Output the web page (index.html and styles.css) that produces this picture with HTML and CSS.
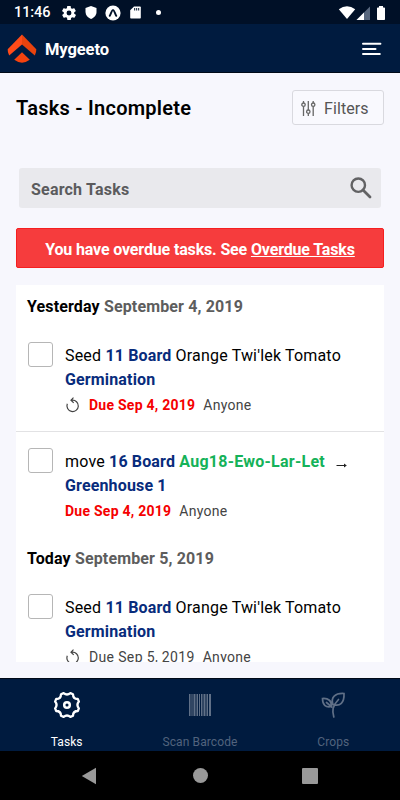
FILE: index.html
```html
<!DOCTYPE html>
<html lang="en">
<head>
<meta charset="utf-8">
<title>Mygeeto</title>
<link rel="stylesheet" href="styles.css">
</head>
<body>
<div class="statusbar">
  <span class="clock">11:46</span>
  <svg class="gear" width="14" height="14" viewBox="2 2 20 20" fill="#fff"><path d="M19.4 13c0-.3.1-.6.1-1s0-.7-.1-1l2.1-1.600c.2-.2.200-.4.100-.6l-2-3.500c-.1-.2-.4-.3-.6-.2l-2.500 1c-.5-.4-1.100-.7-1.700-1l-.4-2.600c0-.3-.2-.5-.5-.5h-4c-.2 0-.5.200-.5.400l-.4 2.700c-.6.200-1.200.6-1.700 1l-2.500-1c-.2-.1-.5 0-.6.2l-2 3.500c-.1.200-.1.500.1.600L4.600 11c0 .3-.1.600-.1 1s0 .7.100 1l-2.100 1.600c-.2.200-.2.400-.1.600l2 3.500c.1.200.4.300.6.200l2.500-1c.5.400 1.100.7 1.700 1l.4 2.600c0 .3.200.5.500.5h4c.2 0 .5-.2.500-.4l.4-2.700c.6-.2 1.200-.6 1.700-1l2.500 1c.2.100.5 0 .6-.2l2-3.500c.1-.2.100-.5-.1-.6zM12 15.500a3.500 3.500 0 1 1 0-7 3.500 3.500 0 0 1 0 7z"/></svg>
  <svg class="shield" width="12" height="13" viewBox="0 0 12 13" fill="#fff"><path d="M6 0l5.500 2v4c0 3.200-2.300 5.800-5.500 7C2.800 11.800.5 9.200.5 6V2z"/></svg>
  <svg class="round" width="16" height="16" viewBox="0 0 16 16"><circle cx="8" cy="8" r="7.600" fill="#fff"/><path d="M4.700 10.800C6 9.300 6.600 5 8 5s2 4.300 3.300 5.800" fill="none" stroke="#00122a" stroke-width="1.900" stroke-linecap="round"/></svg>
  <svg class="sd" width="11" height="13" viewBox="0 0 11 13"><path d="M4 .5h6q.8 0 .8.800v10.400q0 .8-.8.800H1q-.8 0-.8-.8V4.300z" fill="#fff"/><path d="M4.700 2v2.500M6.700 2v2.500M8.700 2v2.500" stroke="#00122a" stroke-width="1"/></svg>
  <span class="dot"></span>
  <svg class="signals" width="48" height="16" viewBox="0 0 48 16"><path d="M.8 4.200Q9 -1.600 17.200 4.200L9 14z" fill="#fff"/><path d="M32 1.500V15H18.500z" fill="#58677e"/><path d="M26 7.500V15h-7.500z" fill="#fff"/><path d="M41 1h4v1.500h1.200q.8 0 .8.800v11q0 .7-.8.700h-6.400q-.8 0-.8-.7v-11q0-.8.800-.8H41z" fill="#fff"/></svg>
</div>
<header class="header">
  <svg class="logo" width="30" height="30" viewBox="0 0 30 30"><path d="M15 .5L29.300 15.300Q29.600 18 27.800 21.500L15 10.500z" fill="#e9430e"/><path d="M15 .5L.7 15.300Q.4 18 2.200 21.500L15 10.500z" fill="#ff4b19"/><path d="M15 18.200l7.800 7.600Q15 31.500 7.200 25.800z" fill="#f5430f"/></svg>
  <span class="brand">Mygeeto</span>
  <svg class="menu" width="20" height="14" viewBox="0 0 20 14"><path d="M1 1.800h17.400M1 7h12.500M1 12h16.800" stroke="#fff" stroke-width="2" stroke-linecap="round"/></svg>
</header>
<main class="main">
  <div class="titlerow">
    <h1 class="title">Tasks - Incomplete</h1>
    <button class="filters">
      <svg width="15" height="15" viewBox="0 0 15 15" fill="none" stroke="#666" stroke-width="1.300"><path d="M2.500 0v2M2.500 5.500V15M7.300 0v9M7.300 12.500V15M12.200 0v2M12.200 5.500V15"/><circle cx="2.500" cy="3.700" r="1.700"/><circle cx="7.300" cy="10.700" r="1.700"/><circle cx="12.200" cy="3.700" r="1.700"/></svg>
      <span>Filters</span>
    </button>
  </div>
  <div class="search">
    <span>Search Tasks</span>
    <svg width="22" height="22" viewBox="0 0 22 22" fill="none" stroke="#626264"><circle cx="8.300" cy="8.200" r="6.700" stroke-width="2.400"/><path d="M13 13l7 7" stroke-width="2.800" stroke-linecap="round"/></svg>
  </div>
  <div class="alert">You have overdue tasks. See <a class="link">Overdue Tasks</a></div>
  <section class="tasks">
    <h2 class="day">Yesterday <span>September 4, 2019</span></h2>
    <article class="task">
      <span class="check"></span>
      <div class="body">
        <p class="desc">Seed <b>11 Board</b> Orange Twi'lek Tomato<br><b>Germination</b></p>
        <p class="meta"><svg class="repeat" width="16" height="16" viewBox="0 0 16 16" fill="none" stroke="#444" stroke-width="1.200"><path d="M2.300 6.800A5.700 5.700 0 1 0 7 3.200h-.8M8.500.7L6 3.200l2.700 2.700"/></svg><span class="due">Due Sep 4, 2019</span><span class="who">Anyone</span></p>
      </div>
    </article>
    <article class="task divided">
      <span class="check"></span>
      <div class="body">
        <p class="desc">move <b>16 Board</b> <b class="crop">Aug18-Ewo-Lar-Let</b><svg class="arrow" width="12" height="7" viewBox="0 0 12 7"><path d="M.5 3.500h9" stroke="#222" stroke-width="1"/><path d="M8 1.500l2.800 2L8 5.500z" fill="#222"/></svg><br><b>Greenhouse 1</b></p>
        <p class="meta"><span class="due">Due Sep 4, 2019</span><span class="who">Anyone</span></p>
      </div>
    </article>
    <h2 class="day today">Today <span>September 5, 2019</span></h2>
    <article class="task">
      <span class="check"></span>
      <div class="body">
        <p class="desc">Seed <b>11 Board</b> Orange Twi'lek Tomato<br><b>Germination</b></p>
        <p class="meta"><svg class="repeat" width="16" height="16" viewBox="0 0 16 16" fill="none" stroke="#444" stroke-width="1.200"><path d="M2.300 6.800A5.700 5.700 0 1 0 7 3.200h-.8M8.500.7L6 3.200l2.700 2.700"/></svg><span class="due upcoming">Due Sep 5, 2019</span><span class="who">Anyone</span></p>
      </div>
    </article>
  </section>
</main>
<nav class="tabs">
  <div class="tab active">
    <svg width="28" height="28" viewBox="0 0 28 28" fill="none" stroke="#fff"><path d="M10.600 2.100Q14 5 17.400 2.100L20 3.200Q20 8 24.800 8L25.900 10.600Q23 14 25.900 17.400L24.800 20Q20 20 20 24.800L17.400 25.900Q14 23 10.600 25.900L8 24.800Q8 20 3.200 20L2.100 17.400Q5 14 2.100 10.600L3.200 8Q8 8 8 3.200Z" stroke-width="2.300" stroke-linejoin="round"/><circle cx="14" cy="14" r="2.800" stroke-width="2.500"/></svg>
    <span>Tasks</span>
  </div>
  <div class="tab">
    <svg width="28" height="28" viewBox="0 0 28 28" fill="#607087"><path d="M3 3h1.500v22H3zM5.500 3h1v22h-1zM7.500 3h2v22h-2zM10.500 3h1.500v22h-1.500zM13 3h1v22h-1zM15 3h1.500v22H15zM17.500 3h2v22h-2zM20.500 3h1.500v22h-1.500zM23 3h2v22h-2z"/></svg>
    <span>Scan Barcode</span>
  </div>
  <div class="tab">
    <svg width="28" height="28" viewBox="0 0 28 28" fill="none" stroke="#607087" stroke-width="1.700" stroke-linecap="round"><path d="M14.800 26C13 20 13.200 15 19.500 8.500M12.800 16L7.500 11.500M12.500 15.500C6.500 17 3.500 13.500 3.500 7.500C9.500 7 12.800 10 12.500 15.500ZM14 13.500C11.500 6.500 16 2 25 2.500C25.500 11.500 21 16 14 13.500Z"/></svg>
    <span>Crops</span>
  </div>
</nav>
<footer class="system">
  <svg width="16" height="18" viewBox="0 0 16 18"><path d="M15 .8v16.400L.8 9z" fill="#999"/></svg>
  <span class="home"></span>
  <span class="recent"></span>
</footer>
</body>
</html>
```
FILE: styles.css
```css
* { box-sizing: border-box; }
body {
  margin: 0;
  width: 400px;
  height: 800px;
  overflow: hidden;
  display: flex;
  flex-direction: column;
  font-family: Roboto, sans-serif;
  color: #000;
  background: #f7f7fd;
}
svg { display: block; flex: none; }
h1, h2, p { margin: 0; }
.statusbar {
  height: 24px;
  flex: none;
  display: flex;
  align-items: center;
  padding: 1px 14px 0 14px;
  background: #001027;
  color: #fff;
}
.clock { width: 48px; font-size: 14.5px; font-weight: 500; letter-spacing: -0.1px; }
.shield { margin-left: 9px; }
.round { margin-left: 8px; }
.sd { margin-left: 9px; }
.dot { width: 5px; height: 5px; margin-left: 15px; border-radius: 50%; background: #fff; }
.signals { margin-left: auto; }
.header {
  height: 49px;
  flex: none;
  display: flex;
  align-items: center;
  padding: 2px 18px 0 7px;
  border-bottom: 1px solid #000a18;
  background: #001b3f;
  color: #fff;
}
.brand { margin: 1px 0 0 8px; font-size: 16.5px; font-weight: 700; letter-spacing: -0.1px; }
.menu { margin-left: auto; }
.main { height: 605px; flex: none; padding: 17px 16px 0; }
.titlerow { height: 35px; display: flex; align-items: center; justify-content: space-between; }
.title { font-size: 20px; font-weight: 600; letter-spacing: 0.25px; }
.filters {
  width: 92px;
  height: 35px;
  display: flex;
  align-items: center;
  gap: 8px;
  padding: 2px 0 0 8px;
  border: 1px solid #d9d9df;
  border-radius: 3px;
  background: #f9f9fe;
  color: #555;
  font: 400 16px Roboto, sans-serif;
  letter-spacing: 0.1px;
}
.search {
  height: 40px;
  margin: 43px 3px 0;
  display: flex;
  align-items: center;
  justify-content: space-between;
  padding: 0 9px 0 12px;
  border-radius: 3px;
  background: #e9e9ed;
  color: #5b5b5d;
  font-size: 16px;
  font-weight: 700;
  letter-spacing: 0.2px;
}
.search span { margin-top: 2px; }
.alert {
  height: 40px;
  margin-top: 20px;
  display: flex;
  align-items: center;
  justify-content: center;
  white-space: pre;
  padding-top: 3px;
  border: 1px solid #f51f20;
  border-radius: 2px;
  background: #f63c3d;
  color: #fff;
  font-size: 16px;
  font-weight: 700;
  letter-spacing: -0.15px;
}
.link { text-decoration: underline; }
.tasks { height: 377px; margin-top: 17px; overflow: hidden; background: #fff; }
.day { height: 43px; padding: 0 11px; font-size: 16px; font-weight: 700; line-height: 43px; letter-spacing: 0.14px; }
.day span { color: #5d5d5d; }
.task { height: 103px; display: flex; padding: 14px 12px 0; }
.divided { height: 106px; border-top: 1px solid #e2e2e4; padding-top: 16px; }
.check { width: 25px; height: 25px; flex: none; border: 1px solid #b6b6b6; border-radius: 3px; }
.body { margin-left: 12px; white-space: nowrap; }
.desc { height: 51px; padding-top: 2px; font-size: 16px; line-height: 24px; letter-spacing: 0.18px; }
.desc b { color: #082c7c; font-weight: 700; letter-spacing: 0.15px; }
.desc .crop { color: #15b259; letter-spacing: 0.25px; }
.arrow { display: inline-block; margin-left: 11px; vertical-align: -2px; }
.meta { height: 24px; display: flex; align-items: center; font-size: 14px; letter-spacing: 0.28px; }
.repeat { margin-right: 8px; }
.due { color: #f50000; font-weight: 700; letter-spacing: 0.25px; }
.upcoming { color: #444; font-weight: 400; letter-spacing: 0.35px; }
.who { margin-left: 8px; color: #444; }
.tabs {
  height: 73px;
  flex: none;
  display: grid;
  grid-template-columns: repeat(3, 1fr);
  border-top: 1px solid #000a18;
  background: #001b3f;
}
.tab { display: flex; flex-direction: column; align-items: center; padding-top: 12px; color: #52637d; font-size: 12px; letter-spacing: 0.1px; }
.tab span { margin-top: 16px; line-height: 14px; }
.active { color: #fff; }
.system { height: 49px; flex: none; display: flex; align-items: center; padding-left: 81px; background: #000; }
.home { width: 15px; height: 15px; margin-left: 96px; border-radius: 50%; background: #999; }
.recent { width: 16px; height: 16px; margin-left: 94px; border-radius: 1px; background: #999; }
```
